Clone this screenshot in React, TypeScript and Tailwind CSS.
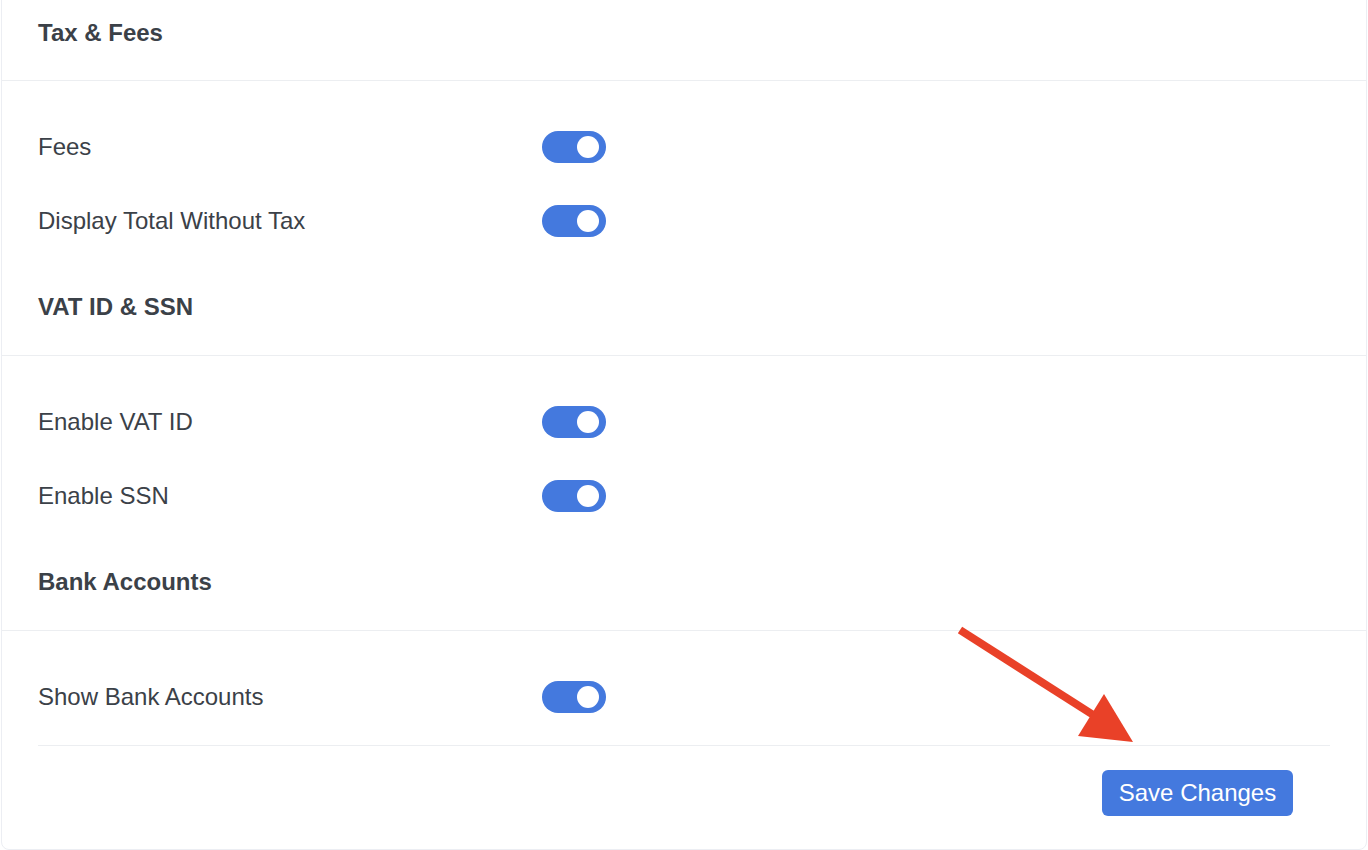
import * as React from "react";

const sections = [
  { title: "Tax & Fees", rows: ["Fees", "Display Total Without Tax"] },
  { title: "VAT ID & SSN", rows: ["Enable VAT ID", "Enable SSN"] },
  { title: "Bank Accounts", rows: ["Show Bank Accounts"] },
];

function Toggle({ on, onClick }: { on: boolean; onClick: () => void }) {
  return (
    <button
      type="button"
      onClick={onClick}
      className={`relative block h-[32px] w-[64px] shrink-0 rounded-full ${on ? "bg-[#4479de]" : "bg-gray-300"}`}
    >
      <span
        className={`absolute top-[5px] h-[22px] w-[22px] rounded-full bg-white ${on ? "right-[7px]" : "left-[7px]"}`}
      />
    </button>
  );
}

export default function App() {
  const [state, setState] = React.useState<Record<string, boolean>>({});

  return (
    <div
      className="relative min-h-[850px] overflow-hidden bg-white text-[#3b4148]"
      style={{ fontFamily: '"Liberation Sans", Arial, sans-serif' }}
    >
      <div className="mx-[1px] -mt-[6px] rounded-b-[8px] border border-[#eceef3] bg-white">
        {sections.map((section, si) => (
          <div key={section.title}>
            <div
              className={`border-b border-[#eceef1] px-[36px] pt-[24px] ${si === 0 ? "pb-[33px]" : "pb-[34px]"}`}
            >
              <h2 className="text-[24px] font-bold leading-[28px]">{section.title}</h2>
            </div>
            <div className="flex flex-col gap-[42px] px-[36px] pt-[50px] pb-[32px]">
              {section.rows.map((row) => {
                const on = state[row] ?? true;
                return (
                  <div key={row} className="flex h-[32px] items-center">
                    <span className="w-[504px] text-[24px] leading-[28px]">{row}</span>
                    <Toggle on={on} onClick={() => setState((s) => ({ ...s, [row]: !on }))} />
                  </div>
                );
              })}
            </div>
          </div>
        ))}

        {/* footer */}
        <div className="mx-[36px] flex justify-end border-t border-[#eceef1] pt-[24px] pb-[33px] pr-[37px]">
          <button
            type="button"
            className="h-[46px] w-[191px] rounded-[6px] bg-[#4479de] text-[24px] text-white"
          >
            Save Changes
          </button>
        </div>
      </div>

      {/* annotation arrow */}
      <svg
        className="pointer-events-none absolute left-[940px] top-[610px]"
        width="220"
        height="150"
        viewBox="940 610 220 150"
      >
        <line x1="960" y1="630" x2="1098" y2="718" stroke="#e94128" strokeWidth="8" />
        <polygon points="1104,694 1078,736 1133,742" fill="#e94128" />
      </svg>
    </div>
  );
}
